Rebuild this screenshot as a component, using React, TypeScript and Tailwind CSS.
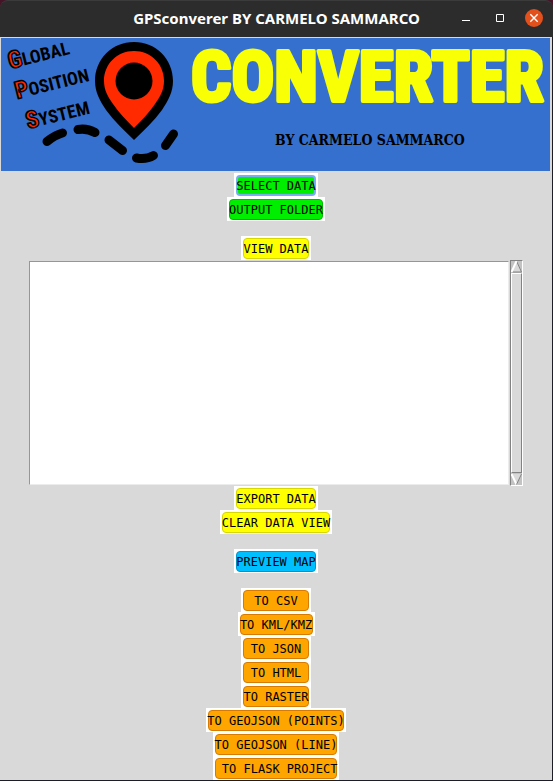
import type { ReactNode } from "react";

type Tone = "green" | "yellow" | "blue" | "orange";

const tones: Record<Tone, string> = {
  green: "bg-[#00ee00] border-[#00bb00]",
  yellow: "bg-[#ffff00] border-[#d6d600]",
  blue: "bg-[#00bfff] border-[#0095cc]",
  orange: "bg-[#ffa500] border-[#d67a00]",
};

function ActionButton({
  tone,
  width,
  focused = false,
  children,
}: {
  tone: Tone;
  width: string;
  focused?: boolean;
  children: ReactNode;
}) {
  return (
    <button type="button" className={`flex h-6 bg-white px-0.5 pt-0.5 pb-px ${width}`}>
      <span
        className={`flex h-full w-full items-center justify-center rounded-[4px] border font-['DejaVu_Sans_Mono','Liberation_Mono',monospace] text-[12px] leading-5 whitespace-pre text-black ${focused ? "border-2 border-[#78aef0] bg-[#00ee00]" : tones[tone]}`}
      >
        {children}
      </span>
    </button>
  );
}

function TitleBar() {
  return (
    <header className="grid h-[37px] grid-cols-[1fr_auto_1fr] items-center rounded-t-lg border-t border-[#3b3b3b] bg-[#2c2c2c] pb-0.5 text-white">
      <span />
      <h1 className="font-['Noto_Sans','Open_Sans',sans-serif] text-[15px] leading-5 font-bold">
        GPSconverer BY CARMELO SAMMARCO
      </h1>
      <div className="flex items-center justify-end gap-4 pr-2.5">
        <button type="button" aria-label="Minimize" className="flex size-[18px] items-center justify-center">
          <svg viewBox="0 0 18 18" className="size-[18px]" fill="none" stroke="white">
            <path d="M5 11.5h8" />
          </svg>
        </button>
        <button type="button" aria-label="Maximize" className="flex size-[18px] items-center justify-center">
          <svg viewBox="0 0 18 18" className="size-[18px]" fill="none" stroke="white">
            <path d="M5.5 5.5h7v7h-7z" />
          </svg>
        </button>
        <button
          type="button"
          aria-label="Close"
          className="flex size-[18px] items-center justify-center rounded-full bg-[#e2501c]"
        >
          <svg viewBox="0 0 18 18" className="size-[18px]" fill="none" stroke="white" strokeWidth="1.4">
            <path d="m5.3 5.3 7.4 7.4m0-7.4-7.4 7.4" />
          </svg>
        </button>
      </div>
    </header>
  );
}

const words = [
  { first: "G", rest: "LOBAL", x: 9, y: 31 },
  { first: "P", rest: "OSITION", x: 16, y: 61 },
  { first: "S", rest: "YSTEM", x: 27, y: 91 },
];

function Banner() {
  return (
    <svg
      viewBox="0 0 549 133"
      className="block w-full bg-[#3570ce] font-['Roboto_Condensed','Open_Sans_Condensed',sans-serif] font-bold"
      role="img"
      aria-label="Global Position System Converter by Carmelo Sammarco"
    >
      {words.map((word) => (
        <text key={word.first} transform={`translate(${word.x} ${word.y}) rotate(-14)`} strokeLinejoin="round">
          <tspan fontSize="24" fill="#ff2a00" stroke="black" strokeWidth="1.5">
            {word.first}
          </tspan>
          <tspan fontSize="18" fill="black">
            {word.rest}
          </tspan>
        </text>
      ))}
      <path
        d="M133 4c-22 0-39 17-39 39 0 11 5 20 11 29 8 11 18 20 28 30 10-10 20-19 28-30 6-9 11-18 11-29 0-22-17-39-39-39z"
        fill="black"
      />
      <path
        d="M133 13c-17 0-30 13-30 30 0 9 4 16 9 23 6 9 14 17 21 24 7-7 15-15 21-24 5-7 9-14 9-23 0-17-13-30-30-30z"
        fill="#ff2a00"
      />
      <circle cx="133" cy="43" r="18.5" fill="black" />
      <g fill="none" stroke="black" strokeWidth="9" strokeLinecap="round">
        <path d="M46 103.5Q54 97 61.5 95" />
        <path d="M77 91.5Q86 90 94 94.5" />
        <path d="M108 102 121.5 112.5" />
        <path d="M135.5 120Q145 122 152.5 117.5" />
        <path d="M164.5 107.5 172.5 96" />
      </g>
      <text
        x="190"
        y="63"
        fontSize="71"
        fill="#f9ff05"
        stroke="#f9ff05"
        strokeWidth="4"
        strokeLinejoin="round"
      >
        CONVERTER
      </text>
      <text
        x="274"
        y="107"
        fontSize="14"
        fill="black"
        className="font-['DejaVu_Serif_Condensed','DejaVu_Serif',serif]"
      >
        BY CARMELO SAMMARCO
      </text>
    </svg>
  );
}

function ScrollBar() {
  return (
    <div className="flex w-[13px] flex-col border border-t-[#828282] border-r-white border-b-white border-l-[#828282] bg-[#c3c3c3]">
      <button type="button" aria-label="Scroll up" className="block h-3">
        <svg viewBox="0 0 11 12" className="h-3 w-[11px]">
          <path d="M5.5 0 0 11h11z" fill="#d9d9d9" />
          <path d="M5.5 0 10.5 11H1" stroke="#828282" fill="none" />
          <path d="M5.5 0 .5 11" stroke="white" strokeWidth="2" />
        </svg>
      </button>
      <div className="flex-1 border border-t-white border-r-[#828282] border-b-[#828282] border-l-white bg-[#d9d9d9]" />
      <button type="button" aria-label="Scroll down" className="block h-3">
        <svg viewBox="0 0 11 12" className="h-3 w-[11px]">
          <path d="M0 1h11L5.5 12z" fill="#d9d9d9" />
          <path d="M.5 1 5.5 11.5" stroke="white" strokeWidth="2" />
          <path d="M10.5 1l-5 10.5" stroke="#828282" />
        </svg>
      </button>
    </div>
  );
}

export default function App() {
  return (
    <div className="bg-[#451426]">
      <TitleBar />
      <main className="border-r border-b border-[#1d1d27] bg-[#d9d9d9]">
        <div className="pt-px pr-0.5 pb-0.5 pl-px">
          <Banner />
        </div>
        <div className="flex flex-col items-center">
          <ActionButton tone="green" width="w-[84px]" focused>SELECT DATA</ActionButton>
          <ActionButton tone="green" width="w-[98px]">OUTPUT FOLDER</ActionButton>
          <div className="mt-[15px]">
            <ActionButton tone="yellow" width="w-[70px]">VIEW DATA</ActionButton>
          </div>
        </div>
        <div className="flex h-[226px] px-[29px]">
          <textarea
            aria-label="Data view"
            className="my-px mr-px block min-w-0 flex-1 resize-none border border-t-[#969696] border-r-[#ececec] border-b-[#ececec] border-l-[#969696] bg-white outline-none"
          />
          <ScrollBar />
        </div>
        <div className="flex flex-col items-center">
          <ActionButton tone="yellow" width="w-[84px]">EXPORT DATA</ActionButton>
          <ActionButton tone="yellow" width="w-[112px]">CLEAR DATA VIEW</ActionButton>
          <div className="my-[15px]">
            <ActionButton tone="blue" width="w-[84px]">PREVIEW MAP</ActionButton>
          </div>
          <ActionButton tone="orange" width="w-[70px]">TO CSV</ActionButton>
          <ActionButton tone="orange" width="w-[77px]">TO KML/KMZ</ActionButton>
          <ActionButton tone="orange" width="w-[70px]">TO JSON</ActionButton>
          <ActionButton tone="orange" width="w-[70px]">TO HTML</ActionButton>
          <ActionButton tone="orange" width="w-[70px]">TO RASTER</ActionButton>
          <ActionButton tone="orange" width="w-[140px]">TO GEOJSON (POINTS)</ActionButton>
          <ActionButton tone="orange" width="w-[126px]">TO GEOJSON (LINE)</ActionButton>
          <ActionButton tone="orange" width="w-[126px]">{" TO FLASK PROJECT"}</ActionButton>
        </div>
      </main>
    </div>
  );
}
